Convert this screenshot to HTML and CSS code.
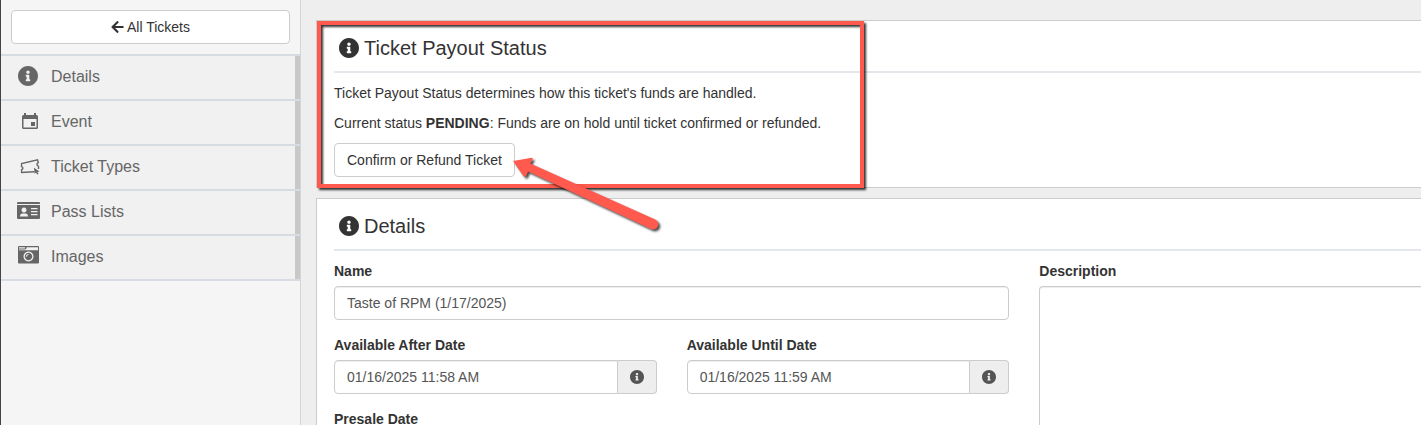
FILE: index.html
```
<!DOCTYPE html>
<html lang="en">
<head>
  <meta charset="utf-8">
  <title>Ticket Details</title>
  <link rel="stylesheet" href="styles.css">
</head>
<body>
  <svg class="sprite" aria-hidden="true">
    <symbol id="icon-info" viewBox="8 8 496 496">
      <path d="M256 8C119.043 8 8 119.083 8 256c0 136.997 111.043 248 248 248s248-111.003 248-248C504 119.083 392.957 8 256 8zm0 110c23.196 0 42 18.804 42 42s-18.804 42-42 42-42-18.804-42-42 18.804-42 42-42zm56 254c0 6.627-5.373 12-12 12h-88c-6.627 0-12-5.373-12-12v-24c0-6.627 5.373-12 12-12h12v-64h-12c-6.627 0-12-5.373-12-12v-24c0-6.627 5.373-12 12-12h64c6.627 0 12 5.373 12 12v100h12c6.627 0 12 5.373 12 12v24z"/>
    </symbol>
  </svg>

  <aside class="sidebar">
    <div class="back">
      <button type="button" class="btn btn-block">
        <svg class="icon-back" viewBox="0 0 448 512" aria-hidden="true"><path d="M257.5 445.1l-22.2 22.2c-9.4 9.4-24.6 9.4-33.9 0L7 273c-9.4-9.4-9.4-24.6 0-33.9L201.4 44.7c9.4-9.4 24.6-9.4 33.9 0l22.2 22.2c9.5 9.5 9.3 25-.4 34.3L136.6 216H424c13.3 0 24 10.7 24 24v32c0 13.3-10.7 24-24 24H136.6l120.5 114.8c9.8 9.3 10 24.8.4 34.3z"/></svg>
        All Tickets
      </button>
    </div>
    <nav>
      <ul class="menu">
        <li><a href="#details">
          <svg class="menu-icon" viewBox="0 0 24 24" aria-hidden="true"><use href="#icon-info" x="2" y="1" width="20" height="20"/></svg>
          Details
        </a></li>
        <li><a href="#event">
          <svg class="menu-icon" viewBox="0 0 24 24" aria-hidden="true">
            <path fill-rule="evenodd" d="M8 3h2v2h8V3h2v2h.500A1.500 1.500 0 0 1 22 6.500V17.500A1.500 1.500 0 0 1 20.500 19H7.500A1.500 1.500 0 0 1 6 17.500V6.500A1.500 1.500 0 0 1 7.500 5H8zM7.500 9v8.500h13V9z"/>
            <path d="M15 12h4v4h-4z"/>
          </svg>
          Event
        </a></li>
        <li><a href="#types">
          <svg class="menu-icon" viewBox="0 0 24 24" aria-hidden="true">
            <path class="line" d="M18 16.800L5.600 17.500V14.700C7.400 14.200 7.300 11.800 5.500 11.600L5.600 8.600L21.500 4.800L22.300 7.600C20.500 8.500 20.500 10.600 22.500 11.200V14"/>
            <path d="M18 12.800l5.500 3.800-2 .3 1 2-1.400.6-1-2-1.600 1.200z"/>
          </svg>
          Ticket Types
        </a></li>
        <li><a href="#passes">
          <svg class="menu-icon" viewBox="0 0 24 24" aria-hidden="true">
            <path d="M2 2h21a1 1 0 0 1 1 1v1H1V3a1 1 0 0 1 1-1z"/>
            <path fill-rule="evenodd" d="M1 5h23v13a1 1 0 0 1-1 1H2a1 1 0 0 1-1-1zM8 7.500a2.500 2.500 0 1 0 .01 0zM4 16.500h8c0-2-1-3-2.500-3h-3C5 13.500 4 14.500 4 16.500zM15 8v1.300h6.500V8zM15 11v1.300h6.500V11zM15 14v1.300h6.500V14z"/>
          </svg>
          Pass Lists
        </a></li>
        <li><a href="#images">
          <svg class="menu-icon" viewBox="0 0 24 24" aria-hidden="true">
            <path fill-rule="evenodd" d="M3 1h19a1 1 0 0 1 1 1v15.500a1 1 0 0 1-1 1H3a1 1 0 0 1-1-1V2a1 1 0 0 1 1-1zM3 2.200v1.300h6V2.200zM10.500 2.200v1.300L9.300 4.600H3v.7h19V2.200zM12.500 6.500a5 5 0 1 0 .01 0zM12.500 7.800a3.700 3.700 0 1 1-.01 0z"/>
            <path class="shine" d="M10.200 11.800a2.300 2.300 0 0 1 2.300-2.300"/>
          </svg>
          Images
        </a></li>
      </ul>
    </nav>
  </aside>

  <main class="content">
    <section class="panel">
      <h2><svg aria-hidden="true"><use href="#icon-info"/></svg>Ticket Payout Status</h2>
      <p>Ticket Payout Status determines how this ticket's funds are handled.</p>
      <p>Current status <strong>PENDING</strong>: Funds are on hold until ticket confirmed or refunded.</p>
      <button type="button" class="btn">Confirm or Refund Ticket</button>

      <div class="callout"></div>
      <svg class="pointer" viewBox="0 0 160 84" aria-hidden="true">
        <path d="M3 11L21.800 7.800Q23.200 8 22.400 9.400L20.300 13.400L145.200 69.600A5 5 0 0 1 141 79L18 21.400L16.200 25.800Q15 27.600 13.600 26.200Z"/>
      </svg>
    </section>

    <section class="panel" id="details">
      <h2><svg aria-hidden="true"><use href="#icon-info"/></svg>Details</h2>
      <form class="columns">
        <div class="fields">
          <div class="field wide">
            <label for="name">Name</label>
            <input type="text" class="control" id="name" value="Taste of RPM (1/17/2025)">
          </div>
          <div class="field">
            <label for="after">Available After Date</label>
            <div class="group">
              <input type="text" class="control" id="after" value="01/16/2025 11:58 AM">
              <span class="addon"><svg aria-hidden="true"><use href="#icon-info"/></svg></span>
            </div>
          </div>
          <div class="field">
            <label for="until">Available Until Date</label>
            <div class="group">
              <input type="text" class="control" id="until" value="01/16/2025 11:59 AM">
              <span class="addon"><svg aria-hidden="true"><use href="#icon-info"/></svg></span>
            </div>
          </div>
          <div class="field">
            <label for="presale">Presale Date</label>
            <div class="group">
              <input type="text" class="control" id="presale">
              <span class="addon"><svg aria-hidden="true"><use href="#icon-info"/></svg></span>
            </div>
          </div>
        </div>
        <div class="field">
          <label for="description">Description</label>
          <textarea class="control description" id="description"></textarea>
        </div>
      </form>
    </section>
  </main>
</body>
</html>
```
FILE: styles.css
```
* { box-sizing: border-box; }
body { margin: 0; display: flex; height: 100vh; overflow: hidden; font: 14px/20px "Liberation Sans", Arial, sans-serif; color: #333; background: #eee; }
svg { display: block; flex: none; fill: currentColor; }
.sprite { display: none; }
p { margin: 0 0 10px; }

.btn { display: inline-block; padding: 6px 12px; border: 1px solid #ccc; border-radius: 4px; background: #fff; color: #333; font: inherit; cursor: pointer; }
.btn:hover { background: #e6e6e6; border-color: #adadad; }
.btn-block { display: flex; width: 100%; align-items: center; justify-content: center; gap: 3px; }

/* sidebar */
.sidebar { flex: none; width: 301px; border-left: 1px solid #444; border-right: 1px solid #d5d5d5; background: #f5f5f5; }
.back { padding: 10px; }
.icon-back { width: 13px; height: 14px; }
.menu { margin: 0; padding: 0; list-style: none; border-top: 2px solid #d7dce2; }
.menu li { border-bottom: 2px solid #d7dce2; }
.menu a { display: flex; align-items: center; gap: 11px; height: 43px; padding: 0 0 2px 15px; border-right: 5px solid #c8c8c8; background: #f1f1f1; color: #666; font-size: 16px; text-decoration: none; }
.menu a:hover { color: #333; }
.menu-icon { width: 24px; height: 24px; }
.menu-icon .line { fill: none; stroke: currentColor; stroke-width: 1.4; }
.menu-icon .shine { fill: none; stroke: #f1f1f1; stroke-width: 1; }

/* panels run off the right edge of the window */
.content { flex: 1; min-width: 0; padding: 20px 0 0 15px; }
.panel { position: relative; margin-bottom: 10px; padding: 0 0 10px 17px; border: 1px solid #ccc; border-right: 0; background: #fff; }
.panel h2 { display: flex; align-items: center; gap: 5px; height: 52px; margin: 0 0 10px; padding: 4px 0 0 5px; border-bottom: 2px solid #e4e8ed; font-size: 20px; font-weight: normal; }
.panel h2 svg { width: 20px; height: 20px; }

/* form */
.columns { display: grid; grid-template-columns: 23fr 13fr; gap: 30px; }
.fields { display: grid; grid-template-columns: 1fr 1fr; gap: 15px 30px; align-content: start; }
.wide { grid-column: 1 / -1; }
label { display: block; margin-bottom: 5px; font-weight: bold; }
.control { display: block; width: 100%; height: 34px; padding: 6px 12px; border: 1px solid #ccc; border-radius: 4px; background: #fff; box-shadow: inset 0 1px 1px rgba(0, 0, 0, .075); color: #555; font: inherit; }
.control:focus { border-color: #66afe9; outline: 0; }
.description { height: 260px; border-right: 0; border-radius: 4px 0 0 4px; resize: none; }
.group { display: flex; }
.group .control { flex: 1; min-width: 0; border-radius: 4px 0 0 4px; }
.addon { display: flex; align-items: center; padding: 0 12px; border: 1px solid #ccc; border-left: 0; border-radius: 0 4px 4px 0; background: #eee; color: #555; }
.addon svg { width: 14px; height: 14px; }

/* red marker box and arrow over the payout panel */
.callout { position: absolute; top: 0; left: 0; bottom: -1px; width: 547px; border: 4px solid #ff5a4d; filter: drop-shadow(2px 2px 1px rgba(0, 0, 0, .8)); pointer-events: none; }
.pointer { position: absolute; z-index: 1; top: 129px; left: 193px; width: 160px; height: 84px; overflow: visible; fill: #ff5a4d; filter: drop-shadow(2px 2px 1px rgba(0, 0, 0, .7)); pointer-events: none; }
```
